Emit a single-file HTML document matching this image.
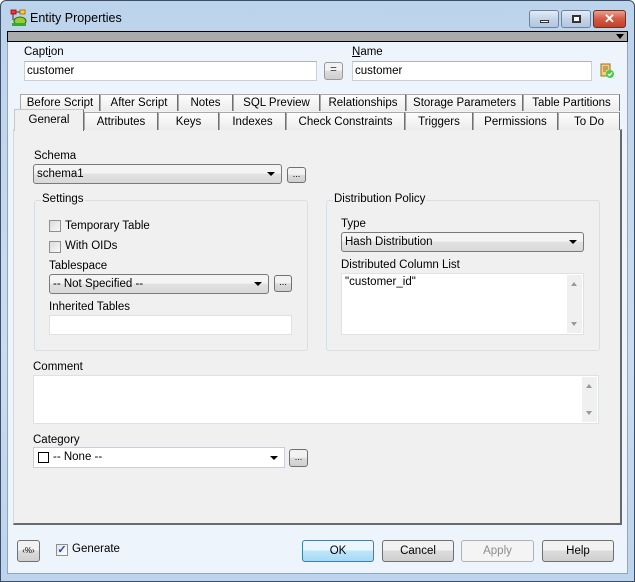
<!DOCTYPE html>
<html><head><meta charset="utf-8"><style>
*{box-sizing:border-box;margin:0;padding:0}
body{width:635px;height:582px;overflow:hidden;font-family:"Liberation Sans",sans-serif;font-size:11.5px;color:#000;background:#fff}
.a{position:absolute}
#win{left:0;top:0;width:635px;height:582px;background:linear-gradient(#bcd3ec,#c9dcf1 60%,#bcd4ee);border:1px solid #3c4f66;border-radius:6px 6px 0 0}
#client{left:7px;top:31px;width:621px;height:543px;background:#eef4fb;border:1px solid #8ea6c4}
.inp{background:#fff;border:1px solid #c8cfd8;border-top-color:#abb3bd}
.btn{background:linear-gradient(#f2f2f2 45%,#dcdcdc 50%,#cfcfcf);border:1px solid #707070;border-radius:3px;text-align:center}
.combo{background:linear-gradient(#f4f4f4 45%,#e2e2e2 50%,#d9d9d9);border:1px solid #7a7a7a;border-radius:3px;padding-left:3px;line-height:18px}
.arr{position:absolute;right:6px;top:7px;width:0;height:0;border-left:4px solid transparent;border-right:4px solid transparent;border-top:4px solid #000}
.tab{position:absolute;height:17px;border:1px solid #a9a9a9;border-bottom:none;background:linear-gradient(#fdfdfd,#ececec);text-align:center;line-height:16px;border-right-color:#707070}
.grp{position:absolute;border:1px solid #d5dfe5;border-radius:3px}
.gt{position:absolute;background:#f0f0f0;padding:0 1px;top:-8px;left:6px}
.cb{position:absolute;width:12px;height:12px;border:1px solid #8f8f8f;background:linear-gradient(135deg,#dcdcdc,#f8f8f8)}
.sb{position:absolute;right:1px;top:1px;bottom:1px;width:15px;background:#f0f0f0}
.up,.dn{position:absolute;left:4px;width:0;height:0;border-left:3px solid transparent;border-right:3px solid transparent}
.up{top:7px;border-bottom:4px solid #999}.dn{bottom:7px;border-top:4px solid #999}
</style></head><body>
<div id="win" class="a"></div>
<svg class="a" style="left:10px;top:9px" width="18" height="18" viewBox="0 0 18 18"><rect x="1" y="1" width="5" height="4" fill="#f33" stroke="#900" stroke-width=".8"/><rect x="10" y="1" width="5" height="4" fill="#fc3" stroke="#960" stroke-width=".8"/><path d="M3 5v6M6 3h4" stroke="#333"/><ellipse cx="10" cy="12" rx="6" ry="4" fill="#9c3" stroke="#360"/><rect x="2" y="14" width="14" height="3" fill="#3a3"/></svg>
<div class="a" style="left:30px;top:11px;font-size:12.5px">Entity Properties</div>
<div class="a" style="left:529px;top:10px;width:30px;height:18px;border:1px solid #6d829f;border-radius:3px;background:linear-gradient(#e3ecf7,#c4d4e8 50%,#b3c7e0)"><div class="a" style="left:10px;top:9px;width:9px;height:3px;background:#fff;border:1px solid #333"></div></div>
<div class="a" style="left:561px;top:10px;width:30px;height:18px;border:1px solid #6d829f;border-radius:3px;background:linear-gradient(#e3ecf7,#c4d4e8 50%,#b3c7e0)"><div class="a" style="left:10px;top:4px;width:9px;height:8px;background:#fff;border:2px solid #333"></div></div>
<div class="a" style="left:593px;top:10px;width:33px;height:18px;border:1px solid #7a2b20;border-radius:3px;background:linear-gradient(#e8a08f,#d45a43 50%,#c0412a);color:#fff;font-weight:bold;text-align:center;line-height:16px;font-size:13px">✕</div>
<div id="client" class="a"></div>
<div class="a" style="left:7px;top:31px;width:621px;height:11px;background:#ababab;border:1px solid #000"></div>
<div class="a" style="left:616px;top:34px;width:0;height:0;border-left:4px solid transparent;border-right:4px solid transparent;border-top:5px solid #000"></div>
<div class="a" style="left:24px;top:46px"><span>Capt<u>i</u>on</span></div>
<div class="a inp" style="left:24px;top:61px;width:293px;height:20px;padding:3px 2px">customer</div>
<div class="a btn" style="left:324px;top:62px;width:19px;height:18px;line-height:15px;color:#444;border-color:#999">=</div>
<div class="a" style="left:352px;top:46px"><u>N</u>ame</div>
<div class="a inp" style="left:352px;top:61px;width:240px;height:20px;padding:3px 2px">customer</div>
<svg class="a" style="left:599px;top:63px" width="16" height="16" viewBox="0 0 16 16"><rect x="2" y="1" width="9" height="12" fill="#f0d080" stroke="#a07020"/><path d="M4 4h5M4 6h5M4 8h3" stroke="#a07020"/><circle cx="11" cy="11" r="4" fill="#4c4"/><path d="M9 11l1.5 1.5L13 9.5" stroke="#fff" fill="none" stroke-width="1.3"/></svg>
<div class="a" style="left:13px;top:129px;width:609px;height:396px;background:#f0f0f0;border:1px solid #d8d8d8;border-right:2px solid #696969;border-bottom:2px solid #696969"></div>
<div class="tab" style="left:20px;top:94px;width:80px">Before Script</div>
<div class="tab" style="left:100px;top:94px;width:78px">After Script</div>
<div class="tab" style="left:178px;top:94px;width:55px">Notes</div>
<div class="tab" style="left:233px;top:94px;width:87px">SQL Preview</div>
<div class="tab" style="left:320px;top:94px;width:86px">Relationships</div>
<div class="tab" style="left:406px;top:94px;width:117px">Storage Parameters</div>
<div class="tab" style="left:523px;top:94px;width:97px">Table Partitions</div>
<div class="tab" style="left:84px;top:112px;width:74px;height:18px;line-height:19px">Attributes</div>
<div class="tab" style="left:158px;top:112px;width:61px;height:18px;line-height:19px">Keys</div>
<div class="tab" style="left:219px;top:112px;width:67px;height:18px;line-height:19px">Indexes</div>
<div class="tab" style="left:286px;top:112px;width:119px;height:18px;line-height:19px">Check Constraints</div>
<div class="tab" style="left:405px;top:112px;width:68px;height:18px;line-height:19px">Triggers</div>
<div class="tab" style="left:473px;top:112px;width:85px;height:18px;line-height:19px">Permissions</div>
<div class="tab" style="left:558px;top:112px;width:62px;height:18px;line-height:19px">To Do</div>
<div class="tab" style="left:14px;top:109px;width:70px;height:22px;background:#f0f0f0;line-height:20px;border-color:#c8c8c8;border-right-color:#707070">General</div>
<div class="a" style="left:34px;top:150px">Schema</div>
<div class="a combo" style="left:33px;top:164px;width:249px;height:20px">schema1<div class="arr"></div></div>
<div class="a btn" style="left:287px;top:167px;width:19px;height:16px;font-size:9px;line-height:12px">...</div>
<div class="grp" style="left:34px;top:200px;width:274px;height:151px"><span class="gt">Settings</span></div>
<div class="cb" style="left:49px;top:220px"></div><div class="a" style="left:65px;top:220px">Temporary Table</div>
<div class="cb" style="left:49px;top:241px"></div><div class="a" style="left:65px;top:240px">With OIDs</div>
<div class="a" style="left:49px;top:260px">Tablespace</div>
<div class="a combo" style="left:49px;top:274px;width:220px;height:20px">-- Not Specified --<div class="arr"></div></div>
<div class="a btn" style="left:274px;top:275px;width:18px;height:17px;font-size:9px;line-height:12px">...</div>
<div class="a" style="left:49px;top:301px">Inherited Tables</div>
<div class="a inp" style="left:49px;top:315px;width:243px;height:20px;border-color:#dde2e8"></div>
<div class="grp" style="left:326px;top:200px;width:274px;height:151px"><span class="gt">Distribution Policy</span></div>
<div class="a" style="left:341px;top:218px">Type</div>
<div class="a combo" style="left:341px;top:232px;width:243px;height:20px">Hash Distribution<div class="arr"></div></div>
<div class="a" style="left:341px;top:259px">Distributed Column List</div>
<div class="a inp" style="left:341px;top:273px;width:243px;height:62px;padding:2px 3px;border-color:#dde2e8">"customer_id"<div class="sb"><div class="up"></div><div class="dn"></div></div></div>
<div class="a" style="left:33px;top:361px">Comment</div>
<div class="a inp" style="left:33px;top:375px;width:566px;height:49px;border-color:#dde2e8"><div class="sb"><div class="up"></div><div class="dn"></div></div></div>
<div class="a" style="left:33px;top:434px">Category</div>
<div class="a inp" style="left:33px;top:447px;width:252px;height:21px;padding:3px 2px 0 19px;border-color:#c8cfd8">-- None --<div class="a" style="left:4px;top:4px;width:11px;height:11px;border:1px solid #000;background:#fff"></div><div class="arr" style="top:8px"></div></div>
<div class="a btn" style="left:289px;top:449px;width:19px;height:18px;font-size:9px;line-height:14px">...</div>
<div class="a btn" style="left:17px;top:540px;width:23px;height:22px;font-size:8px;line-height:20px">‹%›</div>
<div class="a" style="left:56px;top:544px;width:12px;height:12px;border:1px solid #8f8f8f;background:linear-gradient(135deg,#dde4ee,#fff);color:#2a4a9a;font-size:11px;line-height:10px;text-align:center;font-weight:bold">✓</div>
<div class="a" style="left:72px;top:543px">Generate</div>
<div class="a btn" style="left:302px;top:540px;width:72px;height:22px;line-height:20px;border-color:#3c7fb1;background:linear-gradient(#eaf6fd 45%,#bee6fd 50%,#a7d9f5)">OK</div>
<div class="a btn" style="left:382px;top:540px;width:72px;height:22px;line-height:20px">Cancel</div>
<div class="a btn" style="left:461px;top:540px;width:73px;height:22px;line-height:20px;color:#8d8d8d;border-color:#adb2b5;background:#f4f4f4">Apply</div>
<div class="a btn" style="left:542px;top:540px;width:72px;height:22px;line-height:20px">Help</div>
</body></html>
